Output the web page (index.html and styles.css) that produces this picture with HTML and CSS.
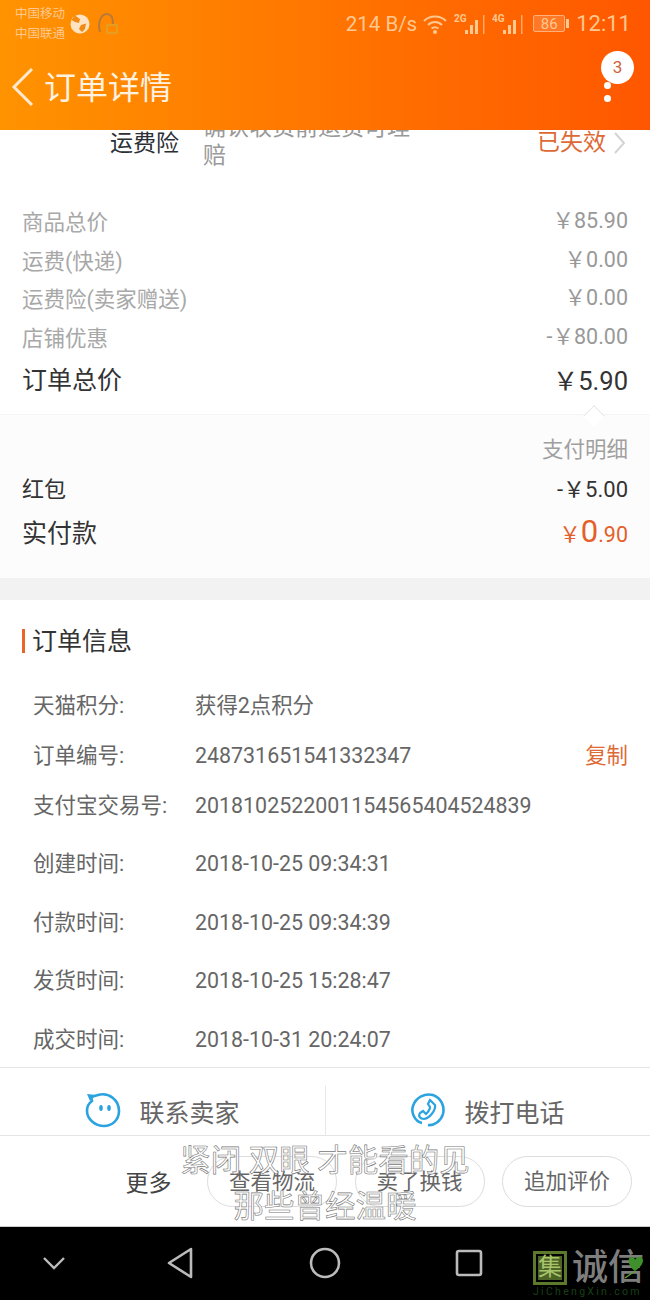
FILE: index.html
```html
<!DOCTYPE html>
<html lang="zh-CN">
<head>
  <meta charset="UTF-8" />
  <title>订单详情</title>
  <link rel="stylesheet" href="styles.css">
</head>
<body>
<div class="phone">
  <header class="top">
    <div class="status-bar">
      <div class="carrier"><span>中国移动</span><span>中国联通</span></div>
      <svg class="globe" width="20" height="20" viewBox="0 0 20 20"><circle cx="10" cy="10" r="9.5" fill="#ffe3c2"/><path d="M5 1.5 L10 5 L9 9 L5 8 L1.5 6 Z M11 11 L16 9.5 L15 15 L12 18 L9 15 Z" fill="#f08a10"/></svg>
      <svg class="headset" width="20" height="22" viewBox="0 0 20 22"><path d="M2 19 C-1 8 4 1 9 1 C13 1 15 5 15 11" fill="none" stroke="#b87a3a" stroke-width="2"/><rect x="9" y="12" width="10" height="8" fill="none" stroke="#dca52e" stroke-width="1.4"/></svg>
      <div class="status-right">
        <span class="speed">214 B/s</span>
        <svg class="wifi" width="24" height="20" viewBox="0 0 24 20"><g fill="none" stroke="#ffc890" stroke-width="2"><path d="M1 7 C7 1 17 1 23 7"/><path d="M5 11 C9 7 15 7 19 11"/><path d="M8.5 14.5 C10.5 13 13.5 13 15.5 14.5"/></g><circle cx="12" cy="18" r="2" fill="#ffc890"/></svg>
        <svg class="signal" width="31" height="22" viewBox="0 0 31 22"><text x="0" y="9" class="net">2G</text><g fill="#ffc890"><rect x="11" y="17" width="3" height="4"/><rect x="16" y="12" width="3" height="9"/><rect x="21" y="7" width="3" height="14"/></g><rect x="29" y="2" width="1.5" height="19" fill="#ffa868"/></svg>
        <svg class="signal" width="31" height="22" viewBox="0 0 31 22"><text x="0" y="9" class="net">4G</text><g fill="#ffc890"><rect x="11" y="17" width="3" height="4"/><rect x="16" y="12" width="3" height="9"/><rect x="21" y="7" width="3" height="14"/></g><rect x="29" y="2" width="1.5" height="19" fill="#ffa868"/></svg>
        <span class="battery"><b>86</b></span><i class="battery-tip"></i>
        <span class="clock">12:11</span>
      </div>
    </div>
    <div class="title-bar">
      <svg class="back" width="24" height="40" viewBox="0 0 24 40"><path d="M21 2 L3 20 L21 38" fill="none" stroke="#ffe9cf" stroke-width="3"/></svg>
      <h1>订单详情</h1>
      <div class="more">
        <span class="badge">3</span>
        <i></i><i></i>
      </div>
    </div>
  </header>

  <main class="content">
    <section class="insurance">
      <div class="ins-name">运费险</div>
      <div class="ins-desc">确认收货前退货可理赔</div>
      <div class="ins-state">已失效</div>
      <svg class="chevron" width="13" height="22" viewBox="0 0 13 22"><path d="M2 1 L11 11 L2 21" fill="none" stroke="#d4d4d4" stroke-width="2"/></svg>
    </section>

    <section class="prices">
      <div class="price-row"><span>商品总价</span><span class="num">￥85.90</span></div>
      <div class="price-row"><span>运费(快递)</span><span class="num">￥0.00</span></div>
      <div class="price-row"><span>运费险(卖家赠送)</span><span class="num">￥0.00</span></div>
      <div class="price-row"><span>店铺优惠</span><span class="num">-￥80.00</span></div>
      <div class="price-total"><span>订单总价</span><span class="num">￥5.90</span></div>
    </section>

    <section class="payment">
      <i class="caret"></i>
      <div class="pay-detail">支付明细</div>
      <div class="pay-row"><span>红包</span><span class="num">-￥5.00</span></div>
      <div class="pay-real"><span>实付款</span><span class="amount"><small>￥</small><b>0</b><small>.90</small></span></div>
    </section>

    <section class="order-info">
      <h2>订单信息</h2>
      <div class="info-row"><span class="label">天猫积分:</span><span>获得2点积分</span></div>
      <div class="info-row"><span class="label">订单编号:</span><span class="val">248731651541332347</span><a class="copy">复制</a></div>
      <div class="info-row"><span class="label">支付宝交易号:</span><span class="val">2018102522001154565404524839</span></div>
      <div class="info-row wide"><span class="label">创建时间:</span><span class="val">2018-10-25 09:34:31</span></div>
      <div class="info-row wide"><span class="label">付款时间:</span><span class="val">2018-10-25 09:34:39</span></div>
      <div class="info-row wide"><span class="label">发货时间:</span><span class="val">2018-10-25 15:28:47</span></div>
      <div class="info-row wide"><span class="label">成交时间:</span><span class="val">2018-10-31 20:24:07</span></div>
    </section>
  </main>

  <div class="contact-bar">
    <div class="contact">
      <svg width="36" height="36" viewBox="0 0 36 36"><path d="M6 5 L13 3 C24 0 34 8 34 19 C34 28 27 34 19 34 C10 34 2 27 2 19 C2 14 4 11 7 9 Z" fill="none" stroke="#2aa3e0" stroke-width="2.6"/><path d="M2 2 L11 3 L5 9 Z" fill="#2aa3e0"/><ellipse cx="16" cy="16" rx="1.8" ry="3" fill="#2aa3e0"/><ellipse cx="24" cy="16" rx="1.8" ry="3" fill="#2aa3e0"/></svg>
      <span>联系卖家</span>
    </div>
    <div class="contact split">
      <svg width="36" height="36" viewBox="0 0 36 36"><path d="M12 31 C4 29 1 20 3 14 C6 5 15 1 23 3 C31 6 35 14 33 22 C31 29 24 34 18 33" fill="none" stroke="#2aa3e0" stroke-width="2.6"/><path d="M20 8 L25 13 C26 18 20 26 14 27 C10 27 8 24 10 21 L13 19 L16 22 C18 20 20 17 20 15 L18 12 Z" fill="none" stroke="#2aa3e0" stroke-width="2.2"/></svg>
      <span>拨打电话</span>
    </div>
  </div>

  <div class="action-bar">
    <span class="more-text">更多</span>
    <a class="pill">查看物流</a>
    <a class="pill">卖了换钱</a>
    <a class="pill">追加评价</a>
  </div>

  <nav class="nav-bar">
    <svg width="26" height="16" viewBox="0 0 26 16"><path d="M3 3 L13 13 L23 3" fill="none" stroke="#bbb" stroke-width="2.4"/></svg>
    <svg width="28" height="32" viewBox="0 0 28 32"><path d="M25 2 L3 16 L25 30 Z" fill="none" stroke="#bbb" stroke-width="2.6" stroke-linejoin="round"/></svg>
    <svg width="32" height="32" viewBox="0 0 32 32"><circle cx="16" cy="16" r="14" fill="none" stroke="#bbb" stroke-width="2.6"/></svg>
    <svg width="28" height="28" viewBox="0 0 28 28"><rect x="2" y="2" width="24" height="24" rx="2" fill="none" stroke="#bbb" stroke-width="2.6"/></svg>
  </nav>

  <div class="subtitle">
    <div>紧闭 双眼 才能看的见</div>
    <div>那些曾经温暖</div>
  </div>

  <div class="watermark">
    <div class="wm-main"><span class="wm-box">集</span><span class="wm-name">诚信</span></div>
    <div class="wm-url">JiChengXin.com</div>
    <svg class="wm-leaf" width="24" height="26" viewBox="0 0 24 26"><path d="M12 18 C4 12 4 4 9 4 C11 4 12 6 12 7 C13 5 15 3 18 4 C22 6 20 13 12 18 Z" fill="#3f8f2a"/><path d="M12 18 L2 25" stroke="#5aa03a" stroke-width="1.5"/></svg>
  </div>
</div>
</body>
</html>
```

FILE: styles.css
```css
* {
  box-sizing: border-box;
}
html, body {
  margin: 0;
  padding: 0;
}
body {
  font-family: Roboto, "Noto Sans CJK SC", sans-serif;
  background-color: #fff;
}
.phone {
  position: relative;
  width: 650px;
  height: 1300px;
  overflow: hidden;
  display: flex;
  flex-direction: column;
}

/* header */
.top {
  height: 130px;
  flex: none;
  position: relative;
  z-index: 2;
  background: linear-gradient(to right, #ff9300, #ff5700);
}
.status-bar {
  height: 45px;
  display: flex;
  align-items: center;
  padding: 2px 19px 0 15px;
  color: #ffc890;
}
.carrier {
  display: flex;
  flex-direction: column;
  font-size: 12.5px;
  line-height: 20px;
  margin-right: 5px;
}
.headset {
  margin-left: 8px;
}
.status-right {
  margin-left: auto;
  display: flex;
  align-items: center;
}
.speed {
  font-size: 20.5px;
  margin-right: 6px;
}
.signal {
  margin-left: 7px;
}
.net {
  font-size: 10px;
  font-weight: bold;
  fill: #ffc890;
}
.battery {
  width: 32px;
  height: 17px;
  margin-left: 10px;
  border: 1px solid #ffb07a;
  border-radius: 2px;
  display: flex;
  align-items: center;
  justify-content: center;
  background-color: rgba(255, 220, 190, 0.2);
}
.battery b {
  font-size: 15px;
  font-weight: normal;
}
.battery-tip {
  width: 3px;
  height: 9px;
  margin-left: 1px;
  background-color: #ffc890;
}
.clock {
  font-size: 22px;
  margin-left: 7px;
}
.title-bar {
  height: 85px;
  display: flex;
  align-items: flex-start;
  padding: 22px 16px 0 11px;
  position: relative;
}
.back {
  flex: none;
}
h1 {
  margin: 0 0 0 9px;
  font-size: 32px;
  font-weight: 400;
  line-height: 42px;
  color: #fff2e0;
}
.more {
  position: absolute;
  left: 601px;
  top: 6px;
  width: 33px;
}
.badge {
  display: block;
  width: 33px;
  height: 33px;
  border-radius: 50%;
  background-color: #fff;
  color: #d0613a;
  font-size: 17px;
  line-height: 33px;
  text-align: center;
}
.more i {
  display: block;
  width: 7px;
  height: 7px;
  margin: 0 0 6px 3px;
  border-radius: 50%;
  background-color: #fff;
}
.more .badge + i {
  margin-top: -2px;
}

/* scrolling content */
.content {
  flex: 1;
  overflow: hidden;
  min-height: 0;
}
.insurance {
  display: flex;
  align-items: flex-start;
  height: 60px;
  margin-top: -16px;
  padding-left: 110px;
}
.ins-name {
  width: 93px;
  margin-top: 12px;
  font-size: 23px;
  line-height: 36px;
  color: #2b2f36;
}
.ins-desc {
  width: 215px;
  flex: none;
  font-size: 23px;
  line-height: 28px;
  color: #999;
}
.ins-state {
  margin: 11px 0 0 119px;
  flex: none;
  font-size: 23px;
  line-height: 36px;
  color: #dd6a35;
}
.chevron {
  margin: 18px 0 0 7px;
  flex: none;
}
.prices {
  padding: 43px 22px 0;
  height: 257px;
  margin-top: -16px;
}
.price-row, .price-total, .pay-row, .pay-real {
  display: flex;
  justify-content: space-between;
  align-items: center;
}
.price-row {
  height: 38.8px;
  font-size: 21.5px;
  color: #a8a8a8;
}
.price-row .num {
  margin-bottom: 4px;
  color: #999;
  font-size: 21.5px;
}
.price-total {
  height: 44px;
  font-size: 25px;
  color: #333;
}
.price-total .num {
  font-size: 25.5px;
}
.payment {
  position: relative;
  margin-top: -1px;
  height: 164px;
  padding: 18px 22px 0;
  background-color: #fdfcfd;
  border-top: 1px solid #f6f4f5;
}
.caret {
  position: absolute;
  right: 47px;
  top: -8px;
  width: 18px;
  height: 18px;
  transform: rotate(45deg) scale(0.85);
  background-color: #fff;
  border-top: 1px solid #e2e2e2;
  border-left: 1px solid #e2e2e2;
}
.pay-detail {
  text-align: right;
  font-size: 21.5px;
  line-height: 34px;
  color: #a0a0a0;
}
.pay-row {
  height: 44px;
  margin-top: -2px;
  font-size: 22px;
  color: #333;
}
.pay-real {
  height: 44px;
  font-size: 25px;
  color: #333;
}
.amount {
  color: #e4602a;
}
.amount b {
  font-size: 31px;
  font-weight: normal;
}
.amount small {
  font-size: 21.5px;
}
.order-info {
  margin-top: 0;
  padding: 0 22px 0 33px;
  border-top: 22px solid #f3f2f3;
}
h2 {
  position: relative;
  margin: 0 0 18px -1px;
  padding-top: 24px;
  font-size: 25px;
  line-height: 36px;
  font-weight: normal;
  color: #333;
}
h2::before {
  content: "";
  position: absolute;
  left: -10px;
  top: 29px;
  width: 2.5px;
  height: 24px;
  background-color: #e8662a;
}
.info-row {
  display: flex;
  align-items: center;
  height: 50px;
  font-size: 21.4px;
  color: #666;
}
.info-row.wide {
  height: 58.5px;
  padding-top: 9px;
}
.label {
  width: 162px;
  flex: none;
  font-size: 21.5px;
}
.val {
  margin-top: 4px;
}
.copy {
  margin-left: auto;
  color: #dd6a35;
}

/* bottom bars */
.contact-bar {
  flex: none;
  height: 68px;
  display: flex;
  border-top: 1px solid #e5e5e5;
  background-color: #fff;
}
.contact {
  flex: 1;
  display: flex;
  align-items: center;
  justify-content: center;
  gap: 18px;
  padding-top: 18px;
  font-size: 25px;
  color: #666;
}
.contact svg {
  margin-top: -2px;
}
.contact.split {
  position: relative;
}
.contact.split::before {
  content: "";
  position: absolute;
  left: 0;
  top: 18px;
  bottom: 0;
  width: 1px;
  background-color: #e8e8e8;
}
.action-bar {
  flex: none;
  height: 92px;
  display: flex;
  align-items: center;
  justify-content: flex-end;
  gap: 17.5px;
  padding: 0 18px 0 0;
  border-top: 1px solid #e5e5e5;
  border-bottom: 1px solid #ccc;
  background-color: #fff;
}
.more-text {
  margin-right: 18px;
  font-size: 23px;
  color: #444;
}
.pill {
  width: 130px;
  height: 51px;
  border: 1px solid #dcdcdc;
  border-radius: 26px;
  text-align: center;
  font-size: 21.5px;
  line-height: 49px;
  color: #666;
}
.nav-bar {
  flex: none;
  height: 73px;
  background-color: #000;
  display: grid;
  grid-template-columns: 54px 126px 145px 144px;
  padding-bottom: 2px;
  align-items: center;
}
.nav-bar svg {
  justify-self: end;
  transform: translateX(50%);
}

/* overlays */
.subtitle {
  position: absolute;
  left: 0;
  right: 0;
  top: 1138px;
  text-align: center;
  font-size: 30.5px;
  line-height: 46px;
  color: #fff;
  -webkit-text-stroke: 0.6px #777;
}
.watermark {
  position: absolute;
  left: 533px;
  top: 1251px;
  width: 117px;
}
.wm-main {
  display: flex;
  align-items: center;
  gap: 5px;
}
.wm-box {
  flex: none;
  width: 34px;
  height: 34px;
  border: 3px solid #5d7a2c;
  background-color: #4c6526;
  box-shadow: inset 0 0 0 2px #000;
  color: #a9c46a;
  font-size: 24px;
  line-height: 27px;
  text-align: center;
}
.wm-name {
  font-size: 36px;
  line-height: 34px;
  white-space: nowrap;
  color: #7e7e7e;
  font-weight: 500;
}
.wm-url {
  font-size: 10.5px;
  line-height: 14px;
  letter-spacing: 2.3px;
  color: #174016;
  white-space: nowrap;
}
.wm-leaf {
  position: absolute;
  left: 90px;
  top: 2px;
}
```
